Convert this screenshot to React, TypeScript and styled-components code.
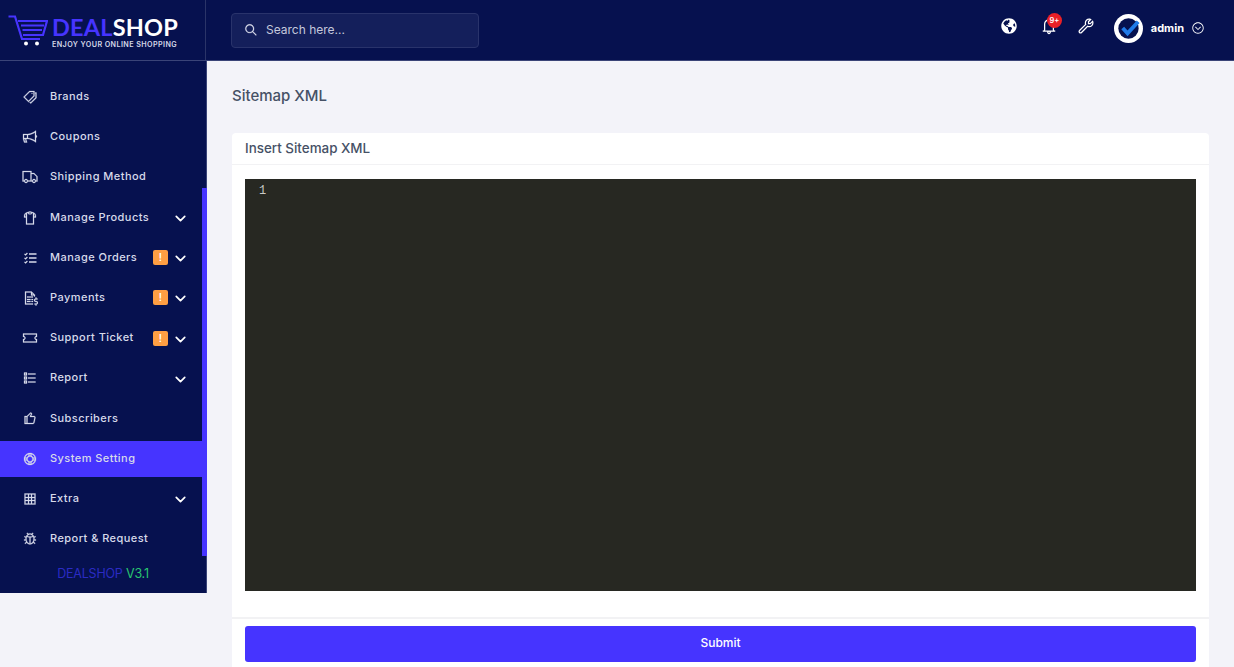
import { FunctionComponent, ReactNode } from "react";
import styled, { createGlobalStyle } from "styled-components";
import { FaGlobeAmericas } from "react-icons/fa";
import { ChevronDown } from "lucide-react";
import {
  LiaBell,
  LiaBugSolid,
  LiaBullhornSolid,
  LiaChevronCircleDownSolid,
  LiaFileInvoiceDollarSolid,
  LiaListSolid,
  LiaLifeRing,
  LiaSearchSolid,
  LiaTableSolid,
  LiaTagsSolid,
  LiaThumbsUp,
  LiaTicketAltSolid,
  LiaTruckSolid,
  LiaTshirtSolid,
  LiaWrenchSolid,
} from "react-icons/lia";

const GlobalStyle = createGlobalStyle`
  html, body {
    margin: 0;
    height: 100%;
    overflow: hidden;
  }
  body {
    background: #f3f3f9;
    font-family: Inter, "Open Sans", sans-serif;
  }
`;

const Page = styled.div`
  height: 667px;
  overflow: hidden;
  display: flex;
  flex-direction: column;
`;

const Topbar = styled.header`
  height: 60px;
  flex: none;
  display: flex;
  align-items: stretch;
  background: #06114f;
  border-bottom: 1px solid #3a4478;
`;

const Brand = styled.div`
  width: 206px;
  flex: none;
  display: flex;
  align-items: flex-start;
  gap: 4px;
  padding: 14px 0 0 8px;
  box-sizing: border-box;
  border-right: 1px solid #2a3468;
`;

const BrandText = styled.div`
  display: flex;
  flex-direction: column;
`;

const BrandName = styled.div`
  font-family: Lato, sans-serif;
  font-size: 23.5px;
  line-height: 26px;
  font-weight: 700;
  letter-spacing: 0.2px;
  color: #ffffff;
  span {
    color: #4634ff;
  }
`;

const BrandTag = styled.div`
  font-size: 7.2px;
  line-height: 9px;
  font-weight: 600;
  letter-spacing: 0.4px;
  color: #d5d8e8;
  white-space: nowrap;
`;

const TopbarMain = styled.div`
  flex: 1;
  display: flex;
  align-items: flex-start;
  justify-content: space-between;
  padding: 13px 0 0 25px;
`;

const SearchBox = styled.div`
  width: 248px;
  height: 35px;
  box-sizing: border-box;
  display: flex;
  align-items: center;
  gap: 8px;
  padding: 0 0 2px 12px;
  background: #141f5b;
  border: 1px solid #29336b;
  border-radius: 4px;
  color: #c4c8dc;
  font-size: 12px;
  svg {
    font-size: 14px;
    color: #e4e6f2;
    stroke: currentColor;
    stroke-width: 0.6;
    transform: scaleX(-1);
  }
`;

const TopActions = styled.div`
  display: flex;
  align-items: center;
  height: 30px;
  padding-right: 29px;
  color: #ffffff;
`;

const ActionIcon = styled.div<{ $gap: number; $raised?: boolean }>`
  position: relative;
  display: flex;
  font-size: 18px;
  margin-right: ${(p) => p.$gap}px;
  margin-bottom: ${(p) => (p.$raised ? 4 : 0)}px;
`;

const Counter = styled.span`
  position: absolute;
  top: -3px;
  left: 8px;
  width: 15px;
  height: 15px;
  border-radius: 50%;
  background: #ea2027;
  color: #fff;
  font-size: 7.5px;
  font-weight: 600;
  line-height: 15px;
  text-align: center;
`;

const UserName = styled.span`
  font-size: 11px;
  font-weight: 700;
  margin: 0 7px 0 8px;
`;

const Body = styled.div`
  flex: 1;
  display: flex;
  align-items: flex-start;
  min-height: 0;
`;

const Sidebar = styled.aside`
  position: relative;
  width: 207px;
  height: 532px;
  flex: none;
  box-sizing: border-box;
  background: #06114f;
  padding-top: 18px;
  border-right: 1px solid #3a4478;
`;

const ScrollThumb = styled.div`
  position: absolute;
  top: 127px;
  right: -1px;
  width: 5px;
  height: 368px;
  background: #4634ff;
`;

const NavList = styled.nav`
  display: flex;
  flex-direction: column;
  gap: 4.2px;
`;

const NavRow = styled.div<{ $active?: boolean }>`
  height: 36px;
  display: flex;
  align-items: center;
  padding: 0 17px 0 22px;
  background: ${(p) => (p.$active ? "#4634ff" : "transparent")};
  color: #d7daea;
  font-size: 11px;
  font-weight: 500;
  letter-spacing: 0.45px;
  white-space: nowrap;
`;

const NavIcon = styled.span`
  display: flex;
  width: 28px;
  flex: none;
  font-size: 16px;
  svg {
    stroke: currentColor;
    stroke-width: 0.5;
  }
`;

const NavLabel = styled.span`
  flex: 1;
  margin-top: -2px;
`;

const Warn = styled.span`
  width: 15px;
  height: 15px;
  border-radius: 2px;
  background: #ff9f43;
  color: #fff;
  font-size: 10px;
  font-weight: 600;
  line-height: 15px;
  text-align: center;
  margin-right: 4px;
`;

const Chevron = styled.span`
  display: flex;
  color: #ffffff;
  margin-top: 2px;
`;

const Version = styled.div`
  margin-top: 9px;
  text-align: center;
  font-size: 12.5px;
  letter-spacing: -0.2px;
  color: #2b2bc4;
  span {
    color: #28c76f;
  }
`;

const Main = styled.main`
  flex: 1;
  padding: 24px 25px 0;
`;

const PageTitle = styled.h1`
  margin: 0;
  height: 22px;
  font-size: 15px;
  line-height: 22px;
  font-weight: 500;
  color: #465166;
`;

const Card = styled.section`
  margin-top: 26px;
  background: #ffffff;
  border-radius: 4px 4px 0 0;
`;

const CardHeader = styled.div`
  height: 32px;
  box-sizing: border-box;
  padding: 6px 13px 0;
  font-size: 13.4px;
  line-height: 18px;
  font-weight: 500;
  color: #465166;
  border-bottom: 1px solid #f2f2f4;
`;

const CardBody = styled.div`
  padding: 14px 13px 26px;
  border-bottom: 2px solid #f2f2f4;
`;

const Editor = styled.div`
  height: 412px;
  background: #272822;
  box-sizing: border-box;
  padding: 5px 0 0 14px;
  color: #c9c9c6;
  font-family: "Liberation Mono", monospace;
  font-size: 12px;
  line-height: 15px;
`;

const CardFooter = styled.div`
  padding: 7px 13px 16px;
`;

const SubmitButton = styled.button`
  display: block;
  width: 100%;
  height: 36px;
  border: 0;
  border-radius: 3px;
  padding: 0 0 3px;
  background: #4634ff;
  color: #ffffff;
  font-family: inherit;
  font-size: 12px;
  font-weight: 500;
`;

const CartLogo = () => (
  <svg width="40" height="32" viewBox="0 0 40 32" fill="none" stroke="#4634ff" strokeWidth="2.2">
    <path d="M0.5 2.5H7L14 25H32" />
    <path d="M10 7H39L35 21H15" />
    <path d="M13 11.5H36M14.5 16H34" strokeWidth="2" />
    <circle cx="18" cy="29.5" r="2" fill="#fff" stroke="none" />
    <circle cx="29" cy="29.5" r="2" fill="#fff" stroke="none" />
  </svg>
);

const Avatar = () => (
  <svg width="29" height="29" viewBox="0 0 30 30">
    <circle cx="15" cy="15" r="15" fill="#fff" />
    <circle cx="15" cy="15" r="10.5" fill="#06114f" />
    <path d="M9 14.5L14 20L25 8" fill="none" stroke="#1f7ae8" strokeWidth="4" />
  </svg>
);

// line awesome's tasks icon goes too thin at this size
const TasksIcon = () => (
  <svg width="16" height="16" viewBox="0 0 16 16" fill="none">
    <path d="M7 4H14.5M7 8H14.5M7 12H14.5" strokeWidth="1.4" />
    <path d="M2.5 3.8L3.6 4.9L5.4 3M2.5 7.8L3.6 8.9L5.4 7M2.5 11.8L3.6 12.9L5.4 11" strokeWidth="1.2" />
  </svg>
);

type NavItem = {
  label: string;
  icon: ReactNode;
  sub?: boolean;
  warn?: boolean;
  active?: boolean;
};

const navItems: NavItem[] = [
  { label: "Brands", icon: <LiaTagsSolid /> },
  { label: "Coupons", icon: <LiaBullhornSolid /> },
  { label: "Shipping Method", icon: <LiaTruckSolid /> },
  { label: "Manage Products", icon: <LiaTshirtSolid />, sub: true },
  { label: "Manage Orders", icon: <TasksIcon />, sub: true, warn: true },
  { label: "Payments", icon: <LiaFileInvoiceDollarSolid />, sub: true, warn: true },
  { label: "Support Ticket", icon: <LiaTicketAltSolid />, sub: true, warn: true },
  { label: "Report", icon: <LiaListSolid />, sub: true },
  { label: "Subscribers", icon: <LiaThumbsUp /> },
  { label: "System Setting", icon: <LiaLifeRing />, active: true },
  { label: "Extra", icon: <LiaTableSolid />, sub: true },
  { label: "Report & Request", icon: <LiaBugSolid /> },
];

const App: FunctionComponent = () => {
  return (
    <Page>
      <GlobalStyle />
      <Topbar>
        <Brand>
          <CartLogo />
          <BrandText>
            <BrandName>
              <span>DEAL</span>SHOP
            </BrandName>
            <BrandTag>ENJOY YOUR ONLINE SHOPPING</BrandTag>
          </BrandText>
        </Brand>
        <TopbarMain>
          <SearchBox>
            <LiaSearchSolid />
            Search here...
          </SearchBox>
          <TopActions>
            <ActionIcon $gap={22} $raised>
              <FaGlobeAmericas size={16} />
            </ActionIcon>
            <ActionIcon $gap={17} $raised>
              <LiaBell size={20} />
              <Counter>9+</Counter>
            </ActionIcon>
            <ActionIcon $gap={18} $raised>
              <LiaWrenchSolid size={20} />
            </ActionIcon>
            <Avatar />
            <UserName>admin</UserName>
            <ActionIcon $gap={0}>
              <LiaChevronCircleDownSolid size={14} />
            </ActionIcon>
          </TopActions>
        </TopbarMain>
      </Topbar>
      <Body>
        <Sidebar>
          <NavList>
            {navItems.map((item) => (
              <NavRow key={item.label} $active={item.active}>
                <NavIcon>{item.icon}</NavIcon>
                <NavLabel>{item.label}</NavLabel>
                {item.warn && <Warn>!</Warn>}
                {item.sub && (
                  <Chevron>
                    <ChevronDown size={17} strokeWidth={2.4} />
                  </Chevron>
                )}
              </NavRow>
            ))}
          </NavList>
          <Version>
            DEALSHOP <span>V3.1</span>
          </Version>
          <ScrollThumb />
        </Sidebar>
        <Main>
          <PageTitle>Sitemap XML</PageTitle>
          <Card>
            <CardHeader>Insert Sitemap XML</CardHeader>
            <CardBody>
              <Editor>1</Editor>
            </CardBody>
            <CardFooter>
              <SubmitButton>Submit</SubmitButton>
            </CardFooter>
          </Card>
        </Main>
      </Body>
    </Page>
  );
};

export default App;
